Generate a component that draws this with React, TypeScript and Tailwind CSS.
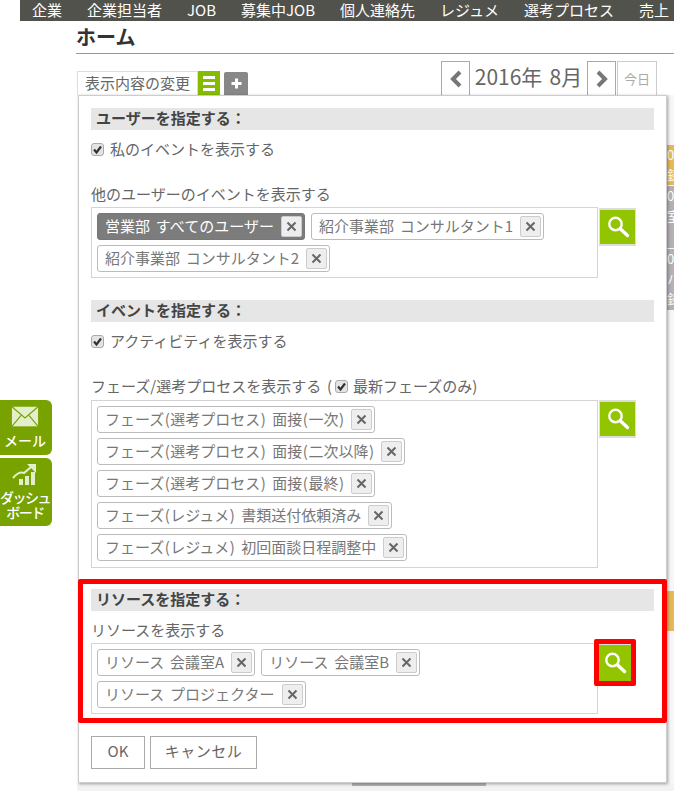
import type { ReactNode } from "react";

const FONT = "font-['Noto_Sans_CJK_JP','Liberation_Sans',sans-serif] [word-spacing:2.5px]";

const NAV = ["企業", "企業担当者", "JOB", "募集中JOB", "個人連絡先", "レジュメ", "選考プロセス", "売上"];

function SearchIcon() {
    return (
        <svg width="26" height="26" viewBox="0 0 26 26" fill="none" stroke="#fff">
            <circle cx="10.5" cy="10" r="6.2" strokeWidth="2.4" />
            <path d="M15.5 15l7 6.5" strokeWidth="3.4" strokeLinecap="round" />
        </svg>
    );
}

function SearchButton({ className = "" }: { className?: string }) {
    return (
        <div className={`flex h-[38px] w-[37px] shrink-0 items-center justify-center border-x border-y-2 border-[#ddd] bg-[#92c500] ${className}`}>
            <SearchIcon />
        </div>
    );
}

function Chip({ label, dark }: { label: string; dark?: boolean }) {
    // parens sit a little wider in the original font
    const parts = label.split(/([()])/);
    return (
        <div
            className={`flex h-[27px] items-center rounded-[3px] border pl-[7px] pr-[2px] ${
                dark ? "border-[#777] bg-[#7c7c7c] text-white" : "border-[#bbb] bg-white text-[#777]"
            }`}
        >
            <span className="mr-[7px] -mt-[2px] whitespace-pre text-[15px] leading-none">
                {parts.map((p, i) =>
                    p === "(" || p === ")" ? (
                        <span key={i} className="px-[0.5px]">
                            {p}
                        </span>
                    ) : (
                        p
                    )
                )}
            </span>
            <span className="flex h-[21px] w-[21px] items-center justify-center rounded-[2px] border border-[#ccc] bg-[#eee]">
                <svg width="11" height="11" viewBox="0 0 11 11" stroke="#666" strokeWidth="2">
                    <path d="M1.5 1.5l8 8M9.5 1.5l-8 8" />
                </svg>
            </span>
        </div>
    );
}

function Check() {
    return (
        <span className="flex h-[13px] w-[13px] shrink-0 items-center justify-center rounded-[3px] border border-[#aaa] bg-[#e4e4e4]">
            <svg width="11" height="11" viewBox="0 0 11 11" fill="none" stroke="#333" strokeWidth="2.2">
                <path d="M2 5.5l2.5 3L9 2.5" />
            </svg>
        </span>
    );
}

function SectionHead({ children }: { children: ReactNode }) {
    return (
        <div className="h-[22px] bg-[#e6e6e6] pl-[5px] text-[15px] font-bold leading-[19px] text-[#444]">
            {children}
        </div>
    );
}

function ChipBox({ className, children }: { className: string; children: ReactNode }) {
    return (
        <div className={`flex w-[507px] gap-x-[6px] gap-y-[5px] border border-[#d4d4d4] p-[5px] ${className}`}>
            {children}
        </div>
    );
}

function CheckLine({ label }: { label: string }) {
    return (
        <div className="flex h-[20px] items-center gap-[6px] text-[15px] leading-none text-[#666]">
            <Check />
            <span className="-mt-[2px]">{label}</span>
        </div>
    );
}

export default function App() {
    return (
        <div className={`relative h-[791px] w-[674px] overflow-hidden bg-white ${FONT}`}>
            {/* Top nav */}
            <nav className="ml-[20px] flex h-[21px] items-center bg-[#52524c] pl-[12px] text-[15px] leading-none text-white">
                {NAV.map((n) => (
                    <span key={n} className="mr-[25px] -mt-[3px] whitespace-nowrap">
                        {n}
                    </span>
                ))}
            </nav>

            {/* Title */}
            <div className="ml-[76px] h-[33px] border-b border-[#999] pt-[3px] text-[20px] font-bold leading-[26px] text-[#333]">
                ホーム
            </div>

            {/* Toolbar */}
            <div className="ml-[77px] mt-[7px] flex h-[34px] items-end">
                <div className="flex h-[24px] w-[121px] items-center border border-b-0 border-[#ddd] pl-[7px] text-[15px] leading-none text-[#666]">
                    <span className="-mt-[2px]">表示内容の変更</span>
                </div>
                <div className="flex h-[24px] w-[22px] flex-col items-center justify-center gap-[3px] bg-[#86bc00]">
                    <span className="h-[3px] w-[12px] bg-white" />
                    <span className="h-[3px] w-[12px] bg-white" />
                    <span className="h-[3px] w-[12px] bg-white" />
                </div>
                <div className="ml-[4px] flex h-[23px] w-[24px] items-center justify-center rounded-t-[2px] bg-[#888]">
                    <svg width="11" height="11" viewBox="0 0 11 11" stroke="#fff" strokeWidth="3">
                        <path d="M5.5 0.5v10M0.5 5.5h10" />
                    </svg>
                </div>
                <div className="ml-[193px] flex h-[34px] w-[29px] items-center justify-center border border-b-0 border-[#aaa]">
                    <svg width="14" height="18" viewBox="0 0 14 18" fill="none" stroke="#777" strokeWidth="4">
                        <path d="M11 2L4 9l7 7" />
                    </svg>
                </div>
                <div className="flex h-[34px] w-[117px] items-center justify-center whitespace-nowrap text-[21px] leading-none text-[#666]">
                    <span className="-mt-[3px]">2016年 8月</span>
                </div>
                <div className="flex h-[34px] w-[29px] items-center justify-center border border-b-0 border-[#aaa]">
                    <svg width="14" height="18" viewBox="0 0 14 18" fill="none" stroke="#777" strokeWidth="4">
                        <path d="M3 2l7 7-7 7" />
                    </svg>
                </div>
                <div className="ml-[1px] flex h-[34px] w-[40px] items-center justify-center border border-b-0 border-[#ccc] text-[13px] leading-none text-[#aaa]">
                    今日
                </div>
            </div>

            {/* Calendar peeking out behind the panel */}
            <div className="ml-auto flex h-[696px] w-[8px] flex-col overflow-hidden bg-[#f7f7f7] pl-[1px] text-[13px] leading-[20px] text-white">
                <div className="mt-[50px] h-[40px] shrink-0 bg-[#e5b95a]">0<br />録</div>
                <div className="mt-[1px] h-[62px] shrink-0 bg-[#b5b0b5]">0<br />室</div>
                <div className="mt-[1px] h-[61px] shrink-0 bg-[#b5b0b5]">0<br />ハ<br />録</div>
                <div className="mt-[281px] h-[40px] shrink-0 bg-[#e5b95a]" />
            </div>

            {/* Bottom row of calendar */}
            <div className="absolute left-[77px] top-[783px] h-[8px] w-[597px] bg-[#f3f3f3]">
                <div className="ml-[275px] h-[3px] w-[134px] bg-[#b4b4b4]" />
            </div>

            {/* Settings panel */}
            <div className="absolute left-[78px] top-[95px] h-[688px] w-[589px] border border-[#ccc] bg-white px-[12px] pt-[12px] shadow-[1px_1px_3px_rgba(0,0,0,0.35)]">
                <SectionHead>ユーザーを指定する：</SectionHead>
                <div className="mt-[9px]">
                    <CheckLine label="私のイベントを表示する" />
                </div>
                <div className="mt-[26px] h-[23px] text-[15px] leading-[20px] text-[#666]">
                    <div className="-mt-[1px]">他のユーザーのイベントを表示する</div>
                </div>
                <div className="flex items-start gap-[1px]">
                    <ChipBox className="h-[71px] flex-wrap content-start">
                        <Chip dark label="営業部 すべてのユーザー" />
                        <Chip label="紹介事業部 コンサルタント1" />
                        <Chip label="紹介事業部 コンサルタント2" />
                    </ChipBox>
                    <SearchButton className="mt-[1px]" />
                </div>

                <div className="mt-[22px]">
                    <SectionHead>イベントを指定する：</SectionHead>
                </div>
                <div className="mt-[9px]">
                    <CheckLine label="アクティビティを表示する" />
                </div>
                <div className="mt-[26px] flex h-[23px] items-start gap-[3px] text-[15px] leading-[20px] text-[#666]">
                    <span className="-mt-[1px]">フェーズ/選考プロセスを表示する (</span>
                    <span className="mt-[3px]">
                        <Check />
                    </span>
                    <span className="-mt-[1px] ml-[2px]">最新フェーズのみ)</span>
                </div>
                <div className="flex items-start gap-[1px]">
                    <ChipBox className="h-[168px] flex-col items-start">
                        <Chip label="フェーズ(選考プロセス) 面接(一次)" />
                        <Chip label="フェーズ(選考プロセス) 面接(二次以降)" />
                        <Chip label="フェーズ(選考プロセス) 面接(最終)" />
                        <Chip label="フェーズ(レジュメ) 書類送付依頼済み" />
                        <Chip label="フェーズ(レジュメ) 初回面談日程調整中" />
                    </ChipBox>
                    <SearchButton />
                </div>

                {/* Highlighted section */}
                <div className="-mx-[13px] mt-[11px] h-[144px] rounded-[2px] border-[5px] border-[#f00] px-[8px] pt-[5px]">
                    <SectionHead>リソースを指定する：</SectionHead>
                    <div className="mt-[9px] h-[23px] text-[15px] leading-[20px] text-[#666]">リソースを表示する</div>
                    <div className="flex items-start">
                        <ChipBox className="h-[71px] flex-wrap content-start">
                            <Chip label="リソース 会議室A" />
                            <Chip label="リソース 会議室B" />
                            <Chip label="リソース プロジェクター" />
                        </ChipBox>
                        <div className="-ml-[4px] -mt-[4px] rounded-[2px] border-[5px] border-[#f00]">
                            <div className="flex h-[37px] w-[32px] items-center justify-center border-t border-[#ddd] bg-[#92c500]">
                                <SearchIcon />
                            </div>
                        </div>
                    </div>
                </div>

                <div className="mt-[13px] flex gap-[5px] text-[15px] leading-none text-[#666]">
                    <div className="flex h-[33px] w-[54px] items-center justify-center border border-[#aaa] pb-[5px]">OK</div>
                    <div className="flex h-[33px] w-[107px] items-center justify-center border border-[#aaa] pb-[5px] tracking-[0.5px]">キャンセル</div>
                </div>
            </div>

            {/* Floating side shortcuts */}
            <div className="absolute left-0 top-[400px] flex flex-col gap-[3px] text-white">
                <div className="flex h-[55px] w-[52px] flex-col items-center rounded-r-[6px] bg-[#77a200] pr-[2px] pt-[5px]">
                    <svg width="28" height="24" viewBox="0 0 30 24" fill="none" className="shrink-0">
                        <rect x="1" y="1" width="28" height="21" fill="#e3eecb" />
                        <path d="M1 1l14 12L29 1M1 22l10-12M29 22L19 10" stroke="#77a200" strokeWidth="1.2" />
                    </svg>
                    <span className="mt-[2px] text-[14px] font-medium leading-[18px]">メール</span>
                </div>
                <div className="flex h-[68px] w-[52px] flex-col items-center rounded-r-[6px] bg-[#77a200] pr-[2px] pt-[5px]">
                    <svg width="26" height="23" viewBox="0 0 26 23" fill="#e3eecb" className="shrink-0">
                        <rect x="7" y="16" width="4" height="6" />
                        <rect x="13" y="13" width="4" height="9" />
                        <rect x="19" y="9" width="4" height="13" />
                        <path d="M1 15q6-7 11-5l7-6" fill="none" stroke="#e3eecb" strokeWidth="2" />
                        <path d="M15 1h9v9z" />
                    </svg>
                    <span className="mt-[4px] w-[54px] shrink-0 text-center text-[14px] font-medium leading-[15px] tracking-[-1.5px] [word-spacing:0px]">
                        ダッシュ ボード
                    </span>
                </div>
            </div>
        </div>
    );
}
